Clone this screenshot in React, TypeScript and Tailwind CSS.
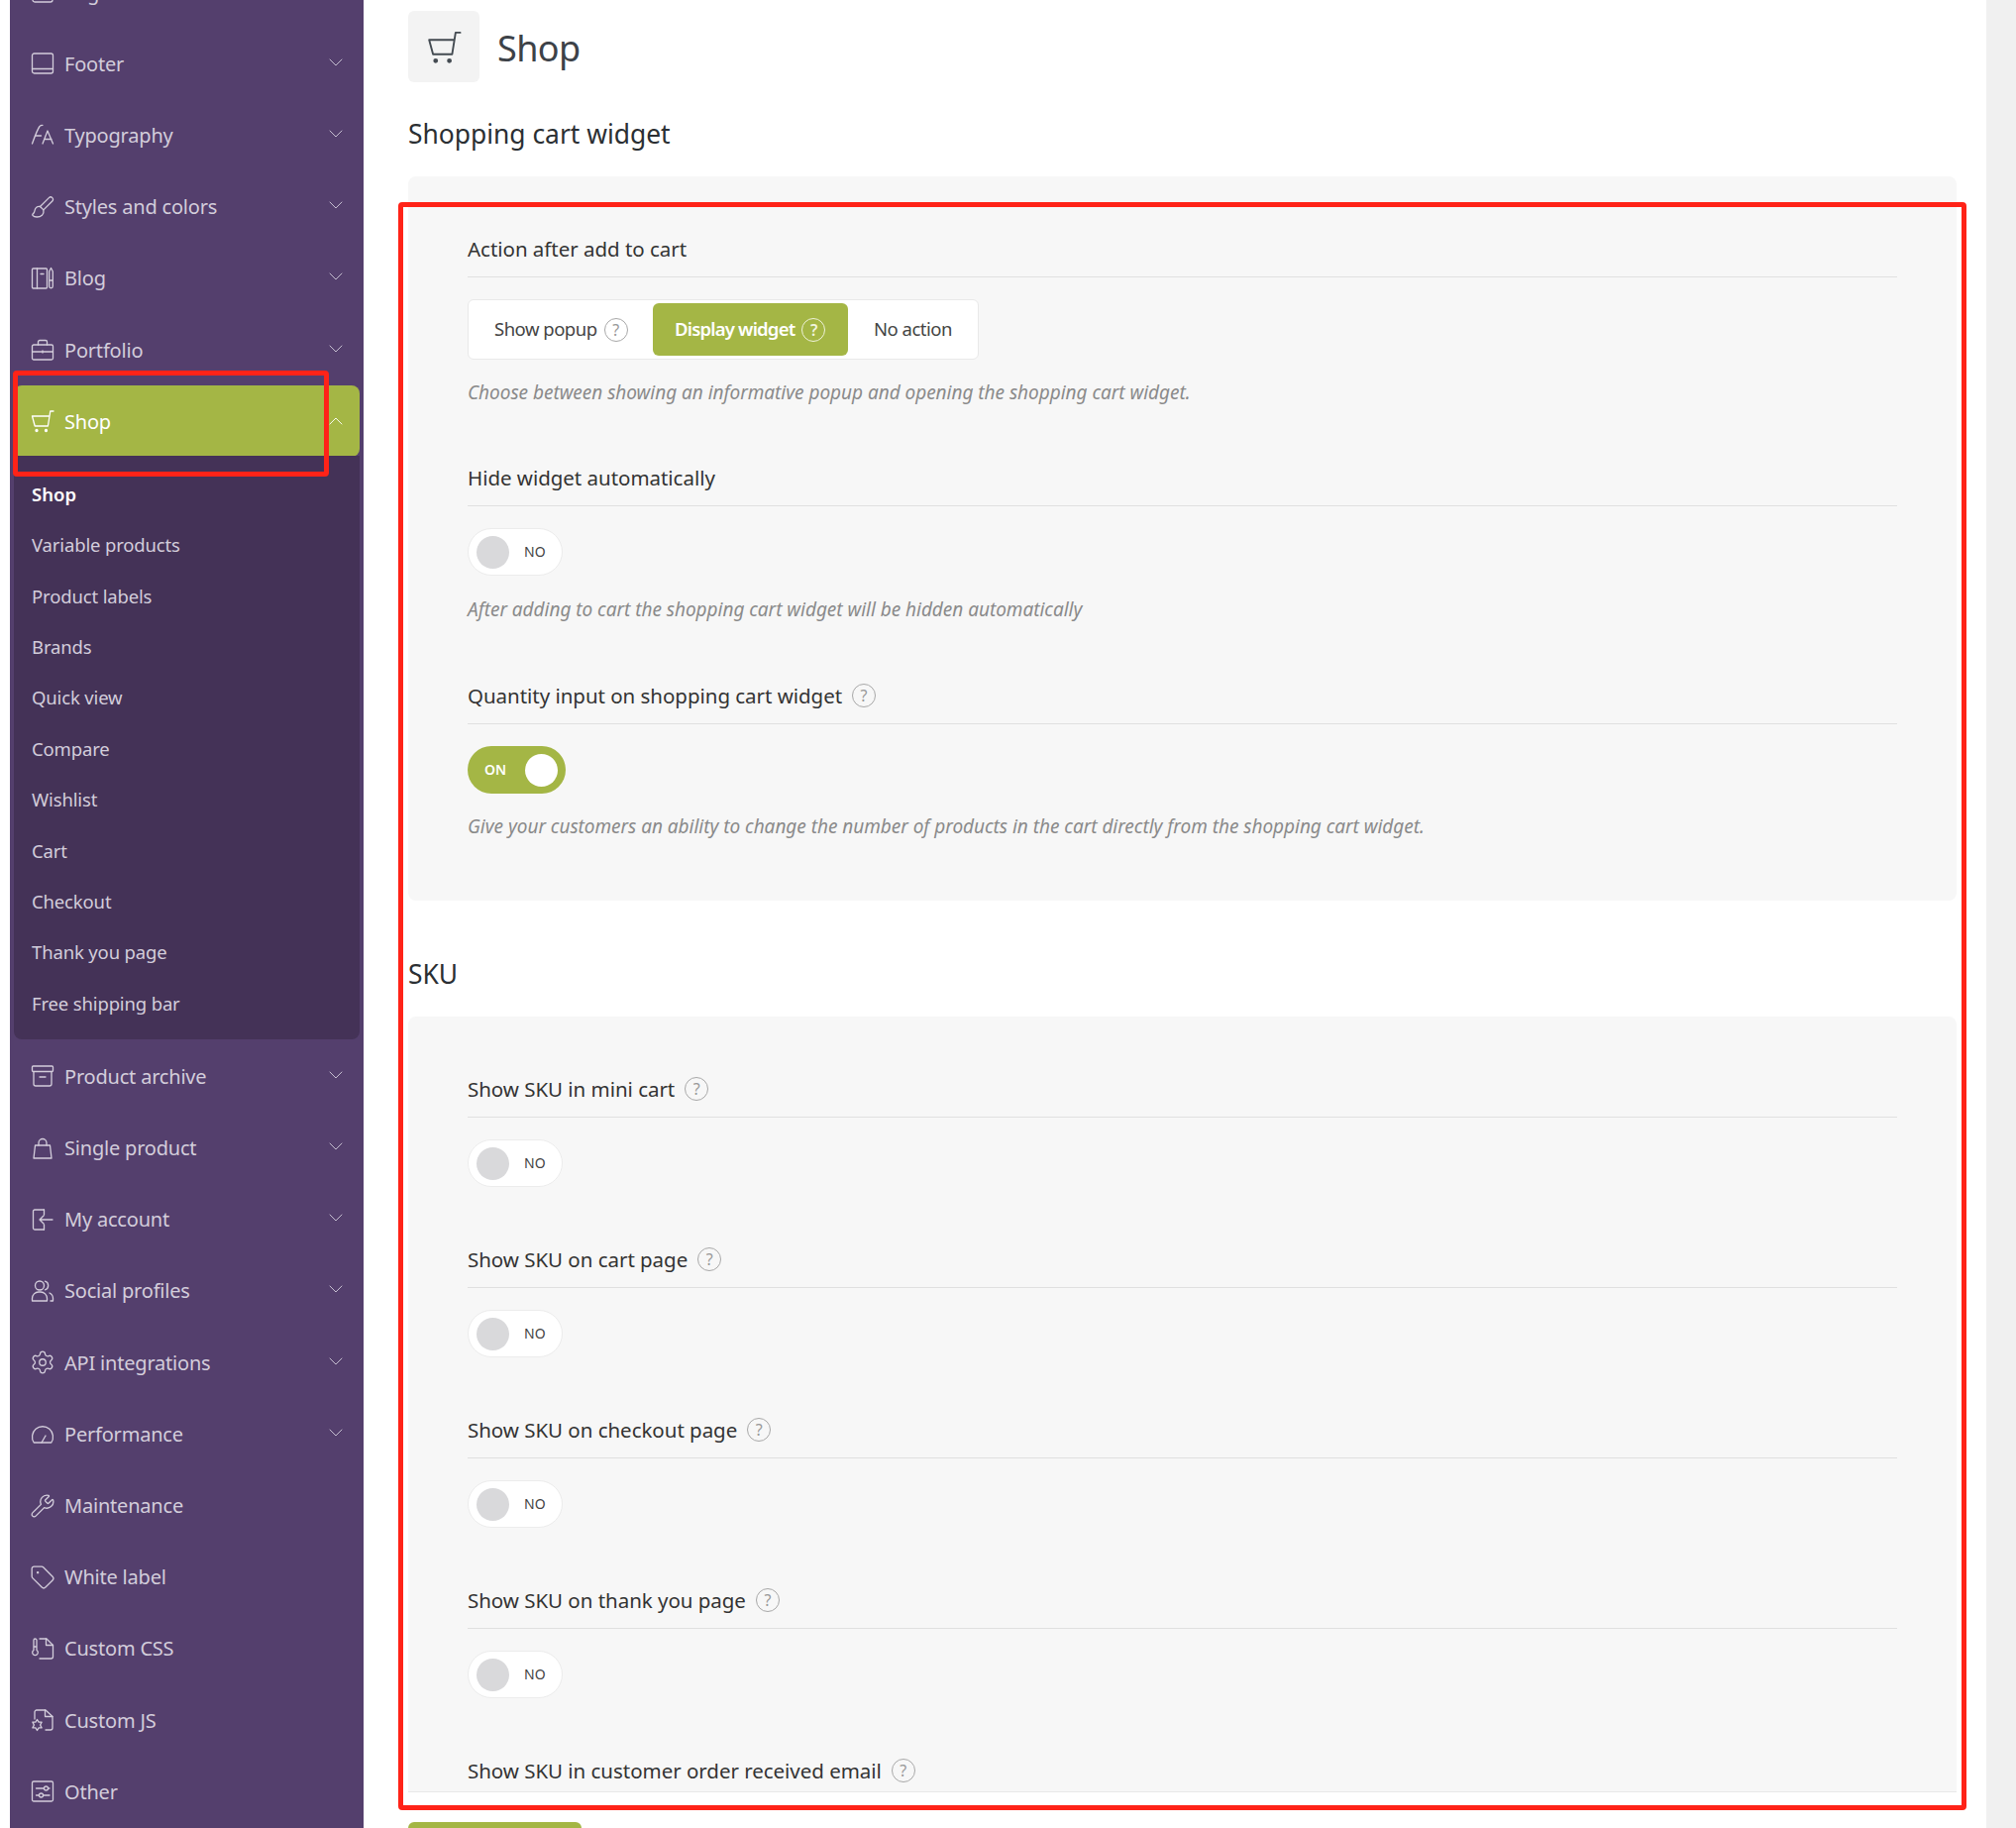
import { ChevronDown, ChevronUp, Settings, Wrench, Tag } from "lucide-react";
import type { ReactNode } from "react";

const font = "font-['Noto_Sans',sans-serif]";

function Glyph({ children, className = "" }: { children: ReactNode; className?: string }) {
  return (
    <svg viewBox="0 0 24 24" fill="none" stroke="currentColor" strokeWidth="1.3" strokeLinecap="round" strokeLinejoin="round" className={`w-[24px] h-[24px] shrink-0 ${className}`}>
      {children}
    </svg>
  );
}

const cart = (
  <>
    <path d="M23 2h-3.2L17.4 17H4.2L1.5 7h17.2" />
    <circle cx="6" cy="21.5" r="1" fill="currentColor" />
    <circle cx="15.5" cy="21.5" r="1" fill="currentColor" />
  </>
);

// lucide icons sit tighter in their box than the reference set, so scale them up a bit
const big = { x: -1, y: -1, width: 26, height: 26, strokeWidth: 1.2 };

const icons: Record<string, ReactNode> = {
  "Page title": <rect x="2" y="2" width="20" height="20" rx="2" />,
  Footer: (
    <>
      <rect x="1.5" y="2" width="21" height="20" rx="2" />
      <path d="M1.5 17.5h21" />
    </>
  ),
  Typography: (
    <>
      <path d="M1.5 21C4 14 6.5 7 9 3.5c.6-.9 1.5-1.2 3-1.2" />
      <path d="M4.5 13h6" />
      <path d="M12 21l5-13 5.5 13M14 16.5h7" />
    </>
  ),
  "Styles and colors": (
    <>
      <path d="M21.8 2.6c-1-1-2.4-1-3.4 0L9.5 11.5l3.4 3.4 8.9-8.9c1-1 1-2.4 0-3.4z" />
      <path d="M9.5 11.5c-3-.6-5 1.2-5.3 3.5-.2 1.7-.8 3.4-2.4 4.4 0 0-.4 2.6 4.4 2.6 4.2 0 7.6-2.7 6.7-6.6" />
    </>
  ),
  Blog: (
    <>
      <rect x="1.5" y="2" width="15" height="20" rx="1" />
      <path d="M6.5 2v20M10 7.5h3" />
      <path d="M20.5 1.5l1.8 3.5v15a1.8 1.8 0 01-3.6 0V5zM18.7 14h3.6" />
    </>
  ),
  Portfolio: (
    <>
      <rect x="1.5" y="7" width="21" height="15" rx="1.5" />
      <path d="M7.5 7V4a1.5 1.5 0 011.5-1.5h6A1.5 1.5 0 0116.5 4v3M1.5 14h21M12 13v2" />
    </>
  ),
  Shop: cart,
  "Product archive": (
    <>
      <rect x="1.5" y="2" width="21" height="5.5" rx="1" />
      <path d="M3 7.5V20a2 2 0 002 2h14a2 2 0 002-2V7.5M9 13h6" />
    </>
  ),
  "Single product": (
    <>
      <path d="M4.5 9h15L21 22H3z" />
      <path d="M8 9V6.5a4 4 0 018 0V9" />
    </>
  ),
  "My account": (
    <>
      <path d="M13.5 2H4a1.5 1.5 0 00-1.5 1.5v17A1.5 1.5 0 004 22h9.5" />
      <path d="M13.5 2v5M13.5 17v5M22 12H9M13 8l-4 4 4 4" />
    </>
  ),
  "Social profiles": (
    <>
      <circle cx="9" cy="6.5" r="4.5" />
      <path d="M1.5 22v-2.5A6.5 6.5 0 018 13h2a6.5 6.5 0 016.5 6.5V22z" />
      <path d="M14.5 2.2a4.5 4.5 0 010 8.6M19 14c2 1 3.5 3 3.5 5.5V22h-2.5" />
    </>
  ),
  "API integrations": <Settings {...big} />,
  Performance: (
    <>
      <path d="M3.2 21a10.5 10.5 0 1117.6 0z" />
      <path d="M11 21l4-7" />
    </>
  ),
  Maintenance: <Wrench {...big} />,
  "White label": <Tag {...big} />,
  "Custom CSS": (
    <>
      <path d="M9 2h7l6.5 6.5V20a2 2 0 01-2 2H9" />
      <path d="M15.5 2v6.5h7" />
      <path d="M3 3.5a1.5 1.5 0 013 0v10a2.8 2.8 0 11-3 0zM3 10h3" />
    </>
  ),
  "Custom JS": (
    <>
      <path d="M4 11V4a2 2 0 012-2h9l7 6.5V20a2 2 0 01-2 2h-5" />
      <path d="M14.5 2v6.5H22" />
      <path d="M6.5 11.5l1.6 2.6h3l-1.5 2.9 1.5 2.9h-3l-1.6 2.6-1.6-2.6h-3L3.4 17l-1.5-2.9h3z" />
    </>
  ),
  Other: (
    <>
      <rect x="1.5" y="2" width="21" height="20" rx="1.5" />
      <path d="M5.5 9h8M5.5 16h3M17.5 9h1.5M13 16h6" />
      <circle cx="15.5" cy="9" r="2" />
      <circle cx="10.5" cy="16" r="2" />
    </>
  ),
};

const before = ["Page title", "Footer", "Typography", "Styles and colors", "Blog", "Portfolio"];
const after = ["Product archive", "Single product", "My account", "Social profiles", "API integrations", "Performance"];
const flat = ["Maintenance", "White label", "Custom CSS", "Custom JS", "Other"];
const shopLinks = ["Variable products", "Product labels", "Brands", "Quick view", "Compare", "Wishlist", "Cart", "Checkout", "Thank you page", "Free shipping bar"];

function NavRow({ name, arrow = true }: { name: string; arrow?: boolean }) {
  return (
    <div className="h-[72.2px] pl-[17px] pr-[12px] flex items-center gap-[10px] text-[#d3cddb] text-[20px] tracking-[-0.2px]">
      <Glyph>{icons[name]}</Glyph>
      <span className="flex-1 mt-[1px]">{name}</span>
      {arrow && <ChevronDown className="w-[24px] h-[24px] -mt-[3px]" strokeWidth={0.9} />}
    </div>
  );
}

function Sidebar() {
  return (
    <aside className="w-[357px] shrink-0 bg-[#543f6d] px-[4px] -mt-[44px] h-[1889px]">
      {before.map((n) => (
        <NavRow key={n} name={n} />
      ))}
      <div className="h-[72px] pl-[17px] pr-[12px] flex items-center gap-[10px] bg-[#a4b645] rounded-[8px] text-white text-[20px] tracking-[-0.2px]">
        <Glyph>{cart}</Glyph>
        <span className="flex-1 mt-[1px]">Shop</span>
        <ChevronUp className="w-[24px] h-[24px]" strokeWidth={0.9} />
      </div>
      <div className="bg-[#443257] -mt-[1px] rounded-b-[8px] pt-[13px] pb-[11px] pl-[18px]">
        <div className="h-[51.3px] flex items-center text-white font-semibold text-[18.5px] tracking-[0px]">Shop</div>
        {shopLinks.map((l) => (
          <div key={l} className="h-[51.4px] flex items-center text-[#d3cddb] text-[18.5px] tracking-[-0.15px]">
            {l}
          </div>
        ))}
      </div>
      <div className="mt-[1px]">
        {after.map((n) => (
          <NavRow key={n} name={n} />
        ))}
        {flat.map((n) => (
          <NavRow key={n} name={n} arrow={false} />
        ))}
      </div>
    </aside>
  );
}

function Help({ light = false }: { light?: boolean }) {
  return (
    <span
      className={`inline-flex items-center justify-center w-[24px] h-[24px] shrink-0 rounded-full border text-[16px] leading-none ${
        light ? "border-[#eef2d8] text-[#f1f4de]" : "border-[#a8a8a8] text-[#999]"
      }`}
    >
      ?
    </span>
  );
}

function Label({ text, help = false }: { text: string; help?: boolean }) {
  return (
    <div className="h-[57px] border-b border-[#e0e0e0] flex items-center gap-[10px] text-[#333] text-[20.5px] tracking-[-0.03px]">
      <span>{text}</span>
      {help && <Help />}
    </div>
  );
}

function Desc({ children }: { children: ReactNode }) {
  return <p className="h-[26px] leading-[26px] italic text-[#8a8a8a] text-[19px] tracking-[-0.03px]">{children}</p>;
}

function ToggleOff() {
  return (
    <div className="mt-[22px] w-[96px] h-[48px] rounded-full bg-white border border-[#ececec] flex items-center pl-[8px] gap-[15px]">
      <span className="w-[33px] h-[33px] rounded-full bg-[#d9d9db]" />
      <span className="text-[14px] text-[#444] -mt-[2px]">NO</span>
    </div>
  );
}

function ToggleOn() {
  return (
    <div className="mt-[22px] w-[99px] h-[48px] rounded-full bg-[#a4b645] flex items-center pl-[17px] pr-[8px] justify-between">
      <span className="text-[14px] font-semibold text-white -mt-[2px]">ON</span>
      <span className="w-[33px] h-[33px] rounded-full bg-white" />
    </div>
  );
}

function ActionGroup() {
  return (
    <div className="mt-[22px] w-[516px] h-[61px] bg-white border border-[#e9e9e9] rounded-[6px] p-[3px] flex items-center text-[18.5px] tracking-[-0.5px] text-[#444]">
      <div className="w-[183px] pl-[23px] flex items-center gap-[7px]">
        <span className="-mt-[1px]">Show popup</span>
        <Help />
      </div>
      <div className="w-[197px] h-[53px] pl-[22px] bg-[#a4b645] rounded-[6px] flex items-center gap-[7px] text-white font-semibold tracking-[-0.8px]">
        <span className="-mt-[1px]">Display widget</span>
        <Help light />
      </div>
      <div className="pl-[26px] -mt-[1px]">No action</div>
    </div>
  );
}

const skuFields = ["Show SKU on cart page", "Show SKU on checkout page", "Show SKU on thank you page"];

export default function App() {
  return (
    <div className={`w-[2035px] h-[1845px] overflow-hidden relative flex bg-white pl-[10px] ${font}`}>
      <Sidebar />

      <main className="flex-1 pl-[45px] pr-[30px]">
        <div className="pt-[11px] flex items-center gap-[18px]">
          <div className="w-[72px] h-[72px] bg-[#f3f3f3] rounded-[6px] flex items-center justify-center text-[#444b52]">
            <svg viewBox="0 0 24 24" fill="none" stroke="currentColor" strokeWidth="1.3" strokeLinecap="round" strokeLinejoin="round" className="w-[35px] h-[35px]">
              {cart}
            </svg>
          </div>
          <h1 className="text-[36px] text-[#3d4248] tracking-[-0.6px] mt-[3px]">Shop</h1>
        </div>

        <h2 className="mt-[30px] mb-[19px] h-[46px] flex items-center text-[26.4px] text-[#2b2f33]">Shopping cart widget</h2>

        <section className="bg-[#f7f7f7] rounded-[8px] px-[60px] pt-[45px] pb-[62px]">
          <Label text="Action after add to cart" />
          <ActionGroup />
          <div className="mt-[20px]">
            <Desc>Choose between showing an informative popup and opening the shopping cart widget.</Desc>
          </div>

          <div className="mt-[45px]">
            <Label text="Hide widget automatically" />
            <ToggleOff />
            <div className="mt-[21px]">
              <Desc>After adding to cart the shopping cart widget will be hidden automatically</Desc>
            </div>
          </div>

          <div className="mt-[46px]">
            <Label text="Quantity input on shopping cart widget" help />
            <ToggleOn />
            <div className="mt-[20px]">
              <Desc>Give your customers an ability to change the number of products in the cart directly from the shopping cart widget.</Desc>
            </div>
          </div>
        </section>

        <h2 className="mt-[51px] mb-[18px] h-[48px] flex items-center text-[26.4px] text-[#2b2f33]">SKU</h2>

        <section className="bg-[#f7f7f7] rounded-t-[8px] border-b border-[#e8e8e8] h-[783px] overflow-hidden px-[60px] pt-[45px]">
          <Label text="Show SKU in mini cart" help />
          <ToggleOff />
          {skuFields.map((f) => (
            <div key={f} className="mt-[45px]">
              <Label text={f} help />
              <ToggleOff />
            </div>
          ))}
          <div className="mt-[45px]">
            <Label text="Show SKU in customer order received email" help />
          </div>
        </section>

        <div className="mt-[30px] w-[175px] h-[50px] bg-[#a4b645] rounded-[6px]" />
      </main>

      <div className="w-[30px] shrink-0 bg-[#f0f0f0]" />

      {/* red annotation boxes */}
      <div className="absolute left-[13px] top-[374px] w-[319px] h-[107px] border-[5px] border-[#ff2318] rounded-[4px]" />
      <div className="absolute left-[402px] top-[204px] w-[1583px] h-[1623px] border-[5px] border-[#ff2318] rounded-[4px]" />
    </div>
  );
}
